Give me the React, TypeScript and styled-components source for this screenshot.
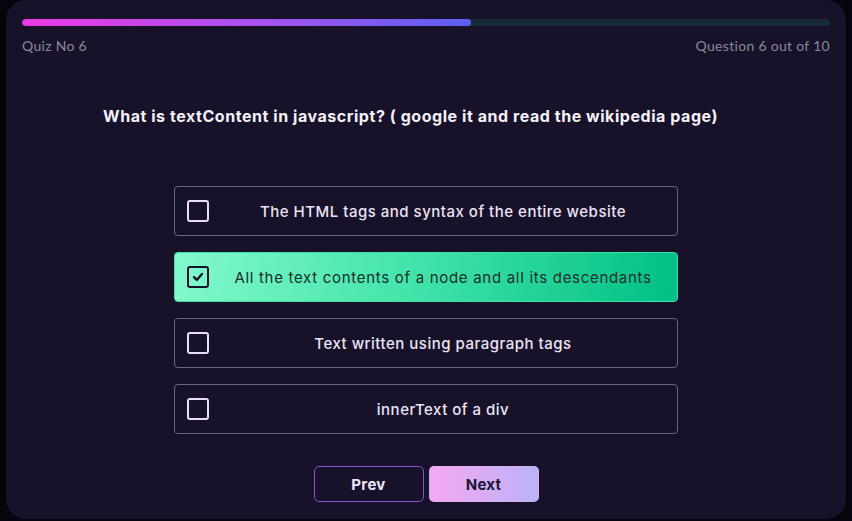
import React from "react";
import styled, { createGlobalStyle } from "styled-components";

const Global = createGlobalStyle`
  html, body { margin: 0; padding: 0; background: #06050d; }
  body { font-family: "Inter", "Open Sans", sans-serif; }
`;

const Page = styled.div`
  width: 852px;
  height: 521px;
  padding: 0 6px 2px 6px;
  box-sizing: border-box;
  display: flex;
`;

const Card = styled.div`
  flex: 1;
  background: #17122a;
  border-radius: 20px;
  padding: 19px 16px 0 16px;
  display: flex;
  flex-direction: column;
`;

const Track = styled.div`
  height: 7px;
  border-radius: 4px;
  background: #172a38;
  overflow: hidden;
`;

const Fill = styled.div`
  height: 100%;
  border-radius: 4px;
  background: linear-gradient(90deg, #ea3ae2 0%, #a653ee 55%, #5a5ff2 100%);
`;

const Meta = styled.div`
  display: flex;
  justify-content: space-between;
  margin-top: 11px;
  font-family: "Lato", "Inter", sans-serif;
  font-size: 14px;
  letter-spacing: 0.3px;
  color: #8c879c;
`;

const Question = styled.h2`
  margin: 52px 0 0 0;
  padding-right: 31px;
  text-align: center;
  color: #f4f1fa;
  font-size: 16px;
  font-weight: 700;
  letter-spacing: 0.55px;
`;

const Options = styled.div`
  margin: 60px auto 0 auto;
  width: 504px;
  display: flex;
  flex-direction: column;
  gap: 16px;
`;

const Option = styled.div<{ $selected?: boolean }>`
  height: 50px;
  box-sizing: border-box;
  border-radius: 4px;
  border: 1px solid ${(p) => (p.$selected ? "#3fe0a8" : "#6b6384")};
  background: ${(p) =>
    p.$selected
      ? "linear-gradient(100deg, #83f9cd 0%, #3fe2a8 50%, #00bf85 100%)"
      : "transparent"};
  display: flex;
  align-items: center;
  padding: 0 12px;
  gap: 12px;
`;

const Box = styled.div<{ $selected?: boolean }>`
  width: 22px;
  height: 22px;
  box-sizing: border-box;
  border-radius: 3px;
  border: 2px solid ${(p) => (p.$selected ? "#17122a" : "#eadcf8")};
  display: flex;
  align-items: center;
  justify-content: center;
  flex-shrink: 0;
`;

const Label = styled.span<{ $selected?: boolean }>`
  flex: 1;
  text-align: center;
  font-size: 15px;
  color: ${(p) => (p.$selected ? "#143028" : "#ece4f6")};
  font-weight: ${(p) => (p.$selected ? 400 : 500)};
  letter-spacing: ${(p) => (p.$selected ? "0.7px" : "0.5px")};
`;

const Buttons = styled.div`
  margin-top: 32px;
  display: flex;
  justify-content: center;
  gap: 5px;
`;

const Btn = styled.button<{ $primary?: boolean }>`
  width: 110px;
  height: 36px;
  border-radius: 5px;
  font-family: "Inter", sans-serif;
  font-size: 15px;
  font-weight: 700;
  letter-spacing: 0.3px;
  cursor: pointer;
  border: 1px solid ${(p) => (p.$primary ? "transparent" : "#8b4fdc")};
  background: ${(p) =>
    p.$primary ? "linear-gradient(90deg, #f4a8f2 0%, #bcb2fa 100%)" : "transparent"};
  color: ${(p) => (p.$primary ? "#1c1630" : "#efe4fa")};
`;

const options = [
  "The HTML tags and syntax of the entire website",
  "All the text contents of a node and all its descendants",
  "Text written using paragraph tags",
  "innerText of a div",
];

export default function App() {
  const selected = 1;
  const progress = 55.6;
  return (
    <>
      <Global />
      <Page>
        <Card>
          <Track>
            <Fill style={{ width: `${progress}%` }} />
          </Track>
          <Meta>
            <span>Quiz No 6</span>
            <span>Question 6 out of 10</span>
          </Meta>
          <Question>
            What is textContent in javascript? ( google it and read the wikipedia page)
          </Question>
          <Options>
            {options.map((o, i) => (
              <Option key={o} $selected={i === selected}>
                <Box $selected={i === selected}>
                  {i === selected && (
                    <svg width="14" height="14" viewBox="0 0 14 14">
                      <path
                        d="M3 7.2 L5.8 10 L11 4"
                        fill="none"
                        stroke="#17122a"
                        strokeWidth="2.4"
                        strokeLinecap="round"
                        strokeLinejoin="round"
                      />
                    </svg>
                  )}
                </Box>
                <Label $selected={i === selected}>{o}</Label>
              </Option>
            ))}
          </Options>
          <Buttons>
            <Btn>Prev</Btn>
            <Btn $primary>Next</Btn>
          </Buttons>
        </Card>
      </Page>
    </>
  );
}
